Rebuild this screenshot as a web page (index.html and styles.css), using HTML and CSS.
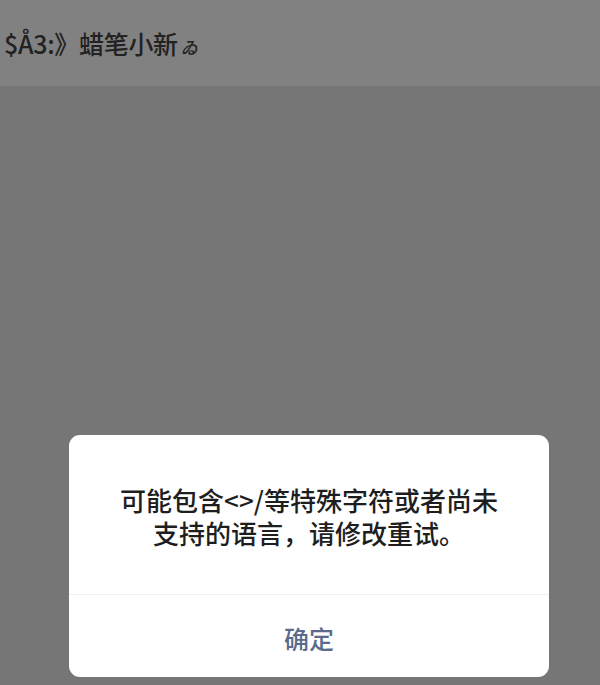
FILE: index.html
```html
<!DOCTYPE html>
<html lang="zh-CN">
<head>
<meta charset="utf-8">
<title>提示</title>
<link rel="stylesheet" href="styles.css">
</head>
<body>
<div class="screen">
  <header class="topbar">
    <span class="title">$Å3:》蜡笔小新<span class="tail">ゐ</span></span>
  </header>
  <main class="stage">
    <div class="dialog">
      <p class="message">可能包含&lt;&gt;/等特殊字符或者尚未<br>支持的语言，请修改重试。</p>
      <div class="actions">
        <span class="confirm">确定</span>
      </div>
    </div>
  </main>
</div>
</body>
</html>
```

FILE: styles.css
```css
html, body {
  margin: 0;
  padding: 0;
  background: #777777;
}
.screen {
  width: 600px;
  height: 685px;
  display: flex;
  flex-direction: column;
  font-family: "Noto Sans CJK SC", "Noto Sans", sans-serif;
  overflow: hidden;
}
.topbar {
  height: 86px;
  flex: 0 0 86px;
  background: #818181;
  display: flex;
  align-items: flex-start;
  padding-left: 4px;
  box-sizing: border-box;
}
.title {
  margin-top: 26px;
  font-size: 25px;
  line-height: 34px;
  font-weight: 500;
  color: #222222;
  letter-spacing: -0.3px;
}
.tail {
  font-size: 17px;
  font-style: italic;
  margin-left: 3px;
}
.stage {
  flex: 1;
  background: #767676;
  display: flex;
  align-items: flex-end;
  justify-content: flex-start;
  padding: 0 0 8px 69px;
}
.dialog {
  width: 480px;
  height: 242px;
  background: #ffffff;
  border-radius: 11px;
  display: flex;
  flex-direction: column;
}
.message {
  margin: 0;
  padding: 48px 10px 0;
  height: 160px;
  box-sizing: border-box;
  text-align: center;
  font-size: 26px;
  line-height: 33px;
  font-weight: 500;
  color: #1e1e1e;
  border-bottom: 1px solid #efefef;
}
.actions {
  flex: 1;
  display: flex;
  align-items: center;
  justify-content: center;
  padding-top: 4px;
}
.confirm {
  font-size: 25px;
  font-weight: 500;
  color: #5b6b8e;
}
```
